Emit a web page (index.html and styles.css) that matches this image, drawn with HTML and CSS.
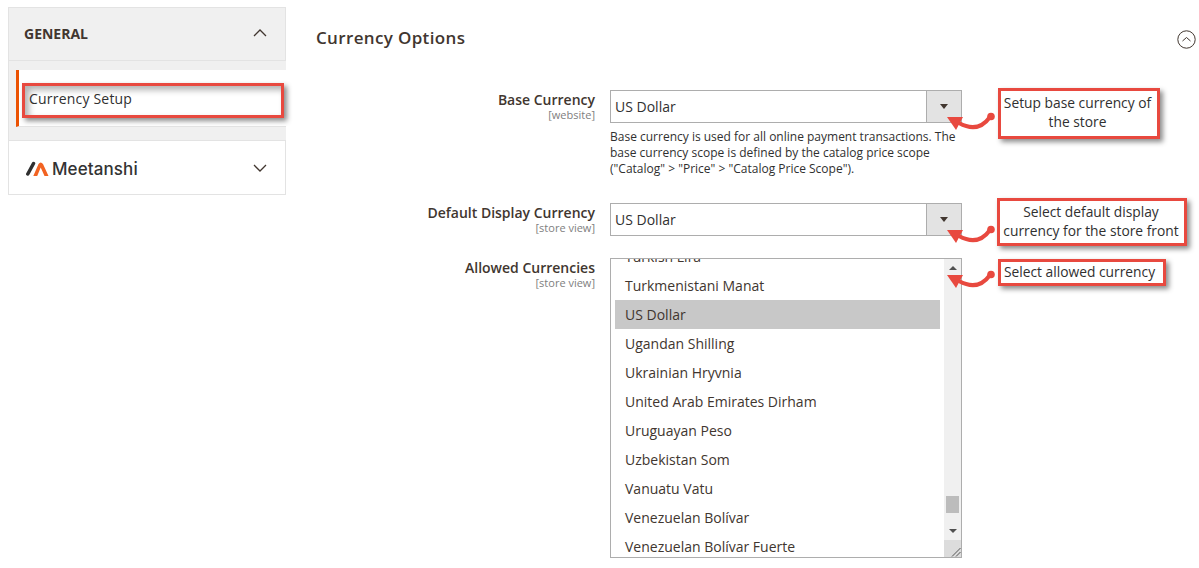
FILE: index.html
```html
<!DOCTYPE html>
<html lang="en">
<head>
    <meta charset="utf-8">
    <meta name="viewport" content="width=device-width, initial-scale=1.0">
    <title>Currency Setup</title>
    <link rel="stylesheet" href="styles.css">
</head>
<body>
    <div class="page">
        <aside class="sidebar">
            <div class="tab tab-general">
                <span class="tab-title">GENERAL</span>
                <svg class="chevron" width="14" height="8" viewBox="0 0 14 8"><path d="M1 7 L7 1 L13 7" fill="none" stroke="#41362f" stroke-width="1.3"/></svg>
            </div>
            <div class="tab-items">
                <div class="tab-item">Currency Setup</div>
            </div>
            <div class="tab tab-brand">
                <span class="brand">
                    <svg width="23" height="15" viewBox="0 0 23 15"><path d="M1.800 13 L7.500 2.500" fill="none" stroke="#303030" stroke-width="3.500" stroke-linecap="round"/><path d="M7.300 15 L12.500 3 Q14.700 0 17 3 L22.500 15 L18.500 15 L14.700 6.500 L11.200 15 Z" fill="#f26322"/></svg>
                    <span class="brand-name">Meetanshi</span>
                </span>
                <svg class="chevron" width="14" height="8" viewBox="0 0 14 8"><path d="M1 1 L7 7 L13 1" fill="none" stroke="#41362f" stroke-width="1.3"/></svg>
            </div>
        </aside>

        <main class="content">
            <div class="section-head">
                <h2 class="section-title">Currency Options</h2>
                <svg class="collapse" width="19" height="19" viewBox="0 0 19 19"><circle cx="9.500" cy="9.500" r="8.700" fill="none" stroke="#41362f" stroke-width="1"/><path d="M5.500 11 L9.500 7.500 L13.500 11" fill="none" stroke="#41362f" stroke-width="1"/></svg>
            </div>

            <div class="field field-base">
                <div class="field-label">
                    <div class="label-text">Base Currency</div>
                    <div class="scope">[website]</div>
                </div>
                <div class="field-control">
                    <div class="select">
                        <span class="select-value">US Dollar</span>
                        <span class="select-button"><span class="caret"></span></span>
                    </div>
                    <p class="note">Base currency is used for all online payment transactions. The base currency scope is defined by the catalog price scope ("Catalog" &gt; "Price" &gt; "Catalog Price Scope").</p>
                </div>
            </div>

            <div class="field field-display">
                <div class="field-label">
                    <div class="label-text">Default Display Currency</div>
                    <div class="scope">[store view]</div>
                </div>
                <div class="field-control">
                    <div class="select">
                        <span class="select-value">US Dollar</span>
                        <span class="select-button"><span class="caret"></span></span>
                    </div>
                </div>
            </div>

            <div class="field field-allowed">
                <div class="field-label">
                    <div class="label-text">Allowed Currencies</div>
                    <div class="scope">[store view]</div>
                </div>
                <div class="field-control">
                    <div class="listbox">
                        <ul class="options">
                            <li>Turkish Lira</li>
                            <li>Turkmenistani Manat</li>
                            <li class="selected">US Dollar</li>
                            <li>Ugandan Shilling</li>
                            <li>Ukrainian Hryvnia</li>
                            <li>United Arab Emirates Dirham</li>
                            <li>Uruguayan Peso</li>
                            <li>Uzbekistan Som</li>
                            <li>Vanuatu Vatu</li>
                            <li>Venezuelan Bolívar</li>
                            <li>Venezuelan Bolívar Fuerte</li>
                        </ul>
                        <div class="scrollbar">
                            <span class="scroll-up"></span>
                            <span class="scroll-thumb"></span>
                            <span class="scroll-down"></span>
                            <span class="scroll-corner">
                                <svg width="10" height="10" viewBox="0 0 10 10"><path d="M1 9.500 L9.500 1 M5 9.500 L9.500 5" stroke="#555" stroke-width="1" fill="none"/></svg>
                            </span>
                        </div>
                    </div>
                </div>
            </div>
        </main>
    </div>

    <!-- red annotations drawn over the screenshot -->
    <div class="callout callout-currency"></div>
    <div class="callout-text callout-base">Setup base currency of the store</div>
    <div class="callout-text callout-display">Select default display currency for the store front</div>
    <div class="callout-text callout-allowed">Select allowed currency</div>

    <svg class="arrow arrow-base" width="52" height="26" viewBox="0 0 52 26"><path d="M13 12 C22 17 34 20 44 6" fill="none" stroke="#e8493f" stroke-width="4" stroke-linecap="round"/><circle cx="45" cy="5.500" r="3.800" fill="#e8493f"/><path d="M1 6 L17 6 L10 19 Z" fill="#e8493f"/></svg>
    <svg class="arrow arrow-display" width="52" height="26" viewBox="0 0 52 26"><path d="M13 12 C22 17 34 20 44 6" fill="none" stroke="#e8493f" stroke-width="4" stroke-linecap="round"/><circle cx="45" cy="5.500" r="3.800" fill="#e8493f"/><path d="M1 6 L17 6 L10 19 Z" fill="#e8493f"/></svg>
    <svg class="arrow arrow-allowed" width="52" height="26" viewBox="0 0 52 26"><path d="M13 12 C22 17 34 20 44 6" fill="none" stroke="#e8493f" stroke-width="4" stroke-linecap="round"/><circle cx="45" cy="5.500" r="3.800" fill="#e8493f"/><path d="M1 6 L17 6 L10 19 Z" fill="#e8493f"/></svg>
</body>
</html>
```

FILE: styles.css
```css
html, body {
    margin: 0;
    padding: 0;
    background-color: #fff;
}

body {
    width: 1199px;
    height: 568px;
    overflow: hidden;
    position: relative;
    font-family: "Open Sans", sans-serif;
    color: #41362f;
}

.page {
    display: flex;
    align-items: flex-start;
    padding: 7px 0 0 8px;
}

/* sidebar */
.sidebar {
    width: 278px;
    flex: none;
    background-color: #f0f0f0;
    box-shadow: inset 1px 0 #e3e3e3;
}

.tab {
    display: flex;
    align-items: center;
    justify-content: space-between;
    box-sizing: border-box;
    border: 1px solid #e3e3e3;
    padding: 0 18px 0 15px;
}

.tab-general {
    height: 54px;
    padding-bottom: 2px;
    background-color: #f0f0f0;
}

.tab-title {
    font-size: 14px;
    font-weight: 700;
    color: #41362f;
}

.tab-items {
    margin-top: 9px;
    margin-bottom: 13px;
    margin-left: 8px;
    background-color: #fff;
    border-left: 3px solid #eb5202;
    border-bottom: 1px solid #e3e3e3;
    height: 56px;
    display: flex;
    align-items: center;
}

.tab-item {
    font-size: 14px;
    letter-spacing: 0.2px;
    padding-left: 10px;
    margin-top: 1px;
    color: #303030;
}

.tab-brand {
    height: 55px;
    padding-left: 17px;
    background-color: #fff;
}

.brand {
    display: flex;
    align-items: center;
    gap: 3px;
    margin-top: 2px;
}

.brand-name {
    font-family: "Inter", sans-serif;
    font-size: 17px;
    font-weight: 500;
    letter-spacing: 0.1px;
    color: #333;
}

/* main form */
.content {
    margin-left: 30px;
    width: 882px;
}

.section-head {
    display: flex;
    justify-content: space-between;
    height: 83px;
    align-items: flex-start;
}

.section-title {
    margin: 20px 0 0;
    font-size: 17px;
    font-weight: 600;
    line-height: 22px;
    letter-spacing: 0.35px;
    color: #41362f;
}

.collapse {
    margin-top: 23px;
    margin-right: 2px;
}

.field {
    display: flex;
}

.field-base {
    height: 113px;
}

.field-display {
    height: 55px;
}

.field-label {
    width: 279px;
    flex: none;
    text-align: right;
}

.label-text {
    font-size: 14px;
    font-weight: 600;
    line-height: 19px;
    color: #41362f;
}

.scope {
    font-size: 11px;
    line-height: 11px;
    color: #808080;
}

.field-control {
    margin-left: 15px;
    width: 352px;
}

.select {
    box-sizing: border-box;
    height: 33px;
    border: 1px solid #adadad;
    display: flex;
    align-items: center;
    justify-content: space-between;
}

.select-value {
    font-size: 14px;
    padding-left: 4px;
    color: #303030;
}

.select-button {
    width: 34px;
    height: 31px;
    background-color: #e3e3e3;
    border-left: 1px solid #adadad;
    display: flex;
    align-items: center;
    justify-content: center;
}

.caret {
    width: 0;
    height: 0;
    border-left: 4px solid transparent;
    border-right: 4px solid transparent;
    border-top: 5px solid #41362f;
}

.note {
    margin: 6px 0 0;
    font-size: 12px;
    line-height: 16px;
    color: #303030;
}

.listbox {
    box-sizing: border-box;
    height: 300px;
    border: 1px solid #adadad;
    display: flex;
    overflow: hidden;
}

.options {
    list-style: none;
    margin: -17px 0 0 4px;
    padding: 0;
    width: 325px;
    flex: none;
}

.options li {
    height: 29px;
    line-height: 29px;
    font-size: 14px;
    padding-left: 10px;
    color: #41362f;
}

.options .selected {
    background-color: #c8c8c8;
}

.scrollbar {
    margin-left: 4px;
    width: 17px;
    flex: none;
    background-color: #f0f0f0;
    position: relative;
}

.scroll-up,
.scroll-down {
    position: absolute;
    left: 5px;
    width: 0;
    height: 0;
    border-left: 4px solid transparent;
    border-right: 4px solid transparent;
}

.scroll-up {
    top: 7px;
    border-bottom: 4px solid #505050;
}

.scroll-down {
    bottom: 24px;
    border-top: 4px solid #505050;
}

.scroll-thumb {
    position: absolute;
    left: 2px;
    top: 237px;
    width: 13px;
    height: 17px;
    background-color: #bcbcbc;
}

.scroll-corner {
    position: absolute;
    left: 0;
    bottom: 0;
    width: 17px;
    height: 17px;
    background-color: #dcdcdc;
    display: flex;
    align-items: flex-end;
    justify-content: flex-end;
}

/* annotations */
.callout {
    position: absolute;
    border: 3px solid #e8493f;
    box-sizing: border-box;
}

.callout-currency {
    left: 22px;
    top: 83px;
    width: 262px;
    height: 35px;
    box-shadow: 3px 3px 5px rgba(0, 0, 0, 0.45), inset 4px 4px 6px rgba(0, 0, 0, 0.3);
}

.callout-text {
    position: absolute;
    box-sizing: border-box;
    border: 3px solid #e8493f;
    background-color: #fff;
    box-shadow: 3px 3px 5px rgba(0, 0, 0, 0.45);
    font-size: 13.8px;
    line-height: 19px;
    color: #303030;
    text-align: center;
    display: flex;
    align-items: center;
    justify-content: center;
}

.callout-base {
    left: 998px;
    top: 88px;
    width: 162px;
    height: 51px;
    padding: 0 3px 4px 0;
}

.callout-display {
    left: 997px;
    top: 198px;
    width: 190px;
    height: 48px;
    padding: 0 2px 2px 0;
}

.callout-allowed {
    left: 998px;
    top: 259px;
    width: 168px;
    height: 27px;
    padding: 0 5px 2px 0;
}

.arrow {
    position: absolute;
    left: 946px;
}

.arrow-base {
    top: 111px;
}

.arrow-display {
    top: 224px;
}

.arrow-allowed {
    top: 269px;
}
```
